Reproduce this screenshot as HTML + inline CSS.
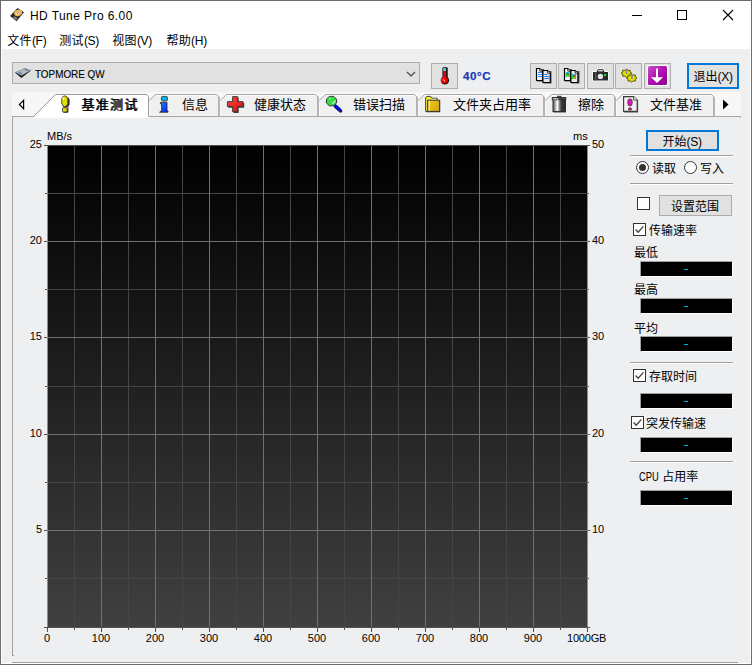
<!DOCTYPE html>
<html lang="zh-CN"><head><meta charset="utf-8"><title>HD Tune Pro 6.00</title>
<style>
*{box-sizing:border-box;margin:0;padding:0}
html,body{width:752px;height:665px;overflow:hidden;background:#eeeff1}
body{position:relative;font-family:"Liberation Sans","Noto Sans CJK SC",sans-serif;font-size:12px;color:#000;-webkit-font-smoothing:antialiased}
.a{position:absolute}
.t{position:absolute;white-space:nowrap;line-height:16px;height:16px}
.cj{font-family:"Liberation Sans","Noto Sans CJK SC",sans-serif;font-size:12px}
.ax{font-family:"Liberation Sans",sans-serif;font-size:11px;line-height:12px;height:12px;position:absolute;white-space:nowrap;color:#000}
.btn{position:absolute;background:#e1e1e1;border:1px solid #adadad}
.blk{position:absolute;background:#000;width:93px;height:16px;left:640px;border:1px solid #fff;border-top-color:#a0a0a0;border-left-color:#a0a0a0}
.blk i{position:absolute;left:43px;top:7px;width:4px;height:1px;background:#00a8e8}
.sep{position:absolute;left:630px;width:103px;height:2px;border-top:1px solid #a0a0a0;border-bottom:1px solid #fff}
.cb{position:absolute;width:13px;height:13px;background:#fff;border:1px solid #333}
.rd{position:absolute;width:13px;height:13px;background:#fff;border:1px solid #333;border-radius:50%}
.l{font-size:12px;letter-spacing:-0.3px}
.tabtxt{position:absolute;top:96px;height:18px;line-height:18px;font-size:13px;white-space:nowrap}
</style></head>
<body>
<div class="a" style="left:0;top:0;width:752px;height:665px;background:#6d6d6d"></div>
<div class="a" style="left:1px;top:1px;width:750px;height:663px;background:#fff"></div>
<div class="a" style="left:2px;top:49px;width:748px;height:614px;background:#eeeff1"></div>
<svg class="a" style="left:8px;top:6px" width="18" height="18" viewBox="0 0 18 18">
<polygon points="9.6,2 16,6.3 8.6,15.2 2,9.9" fill="#2a2a2e"/>
<polygon points="6.2,10.2 9.5,12.3 8.2,14 4.9,11.8" fill="#8a8a90"/>
<ellipse cx="10.1" cy="6.9" rx="4.1" ry="3.2" fill="#f2b451" transform="rotate(-20 10.1 6.9)"/>
<ellipse cx="9.4" cy="7.6" rx="2.2" ry="1.4" fill="#f8d07a" transform="rotate(-20 9.4 7.6)" opacity="0.7"/>
<circle cx="10.2" cy="6.8" r="1.2" fill="#b8b8c4"/>
</svg>
<div class="t" style="left:30px;top:8px;font-family:'Liberation Sans',sans-serif;font-size:12px;letter-spacing:0.42px" id="title">HD Tune Pro 6.00</div>
<svg class="a" style="left:620px;top:0" width="132" height="30" viewBox="0 0 132 30">
<rect x="12" y="15" width="10" height="1" fill="#000"/>
<rect x="57.5" y="10.5" width="9" height="9" fill="none" stroke="#000" stroke-width="1"/>
<path d="M103 10 L113 20 M113 10 L103 20" stroke="#000" stroke-width="1.1" fill="none"/>
</svg>
<div class="t cj" style="left:7.3px;top:33px;letter-spacing:0.3px" id="m1">文件<span class="l">(F)</span></div>
<div class="t cj" style="left:59.3px;top:33px;letter-spacing:0.3px" id="m2">测试<span class="l">(S)</span></div>
<div class="t cj" style="left:112.3px;top:33px;letter-spacing:0.3px" id="m3">视图<span class="l">(V)</span></div>
<div class="t cj" style="left:166.5px;top:33px;letter-spacing:0.3px" id="m4">帮助<span class="l">(H)</span></div>
<div class="btn" style="left:12px;top:62px;width:408px;height:22px"></div>
<svg class="a" style="left:13px;top:65px" width="20" height="16" viewBox="0 0 20 16">
<polygon points="2,7.6 11.5,3.2 18,5.6 8.4,13" fill="#111"/>
<polygon points="2.6,7.2 11.5,3.3 17.4,5.4 8.6,10.8" fill="#b4b8c0"/>
<path d="M5.6 7 L9 9.2" stroke="#4a7ad4" stroke-width="1.3"/>
<path d="M11.8 4.2 L15.2 5.6" stroke="#4a7ad4" stroke-width="1.3"/>
</svg>
<div class="t" style="left:35px;top:66px;font-family:'Liberation Sans',sans-serif;font-size:11px;transform-origin:0 0;transform:scaleX(0.9);-webkit-text-stroke:0.12px #000" id="combo">TOPMORE QW</div>
<svg class="a" style="left:405px;top:69px" width="12" height="10" viewBox="0 0 12 10">
<path d="M2 3 L6 7 L10 3" stroke="#444" stroke-width="1.2" fill="none"/></svg>
<div class="btn" style="left:431px;top:63px;width:27px;height:26px"></div>
<svg class="a" style="left:436px;top:65px" width="18" height="22" viewBox="0 0 18 22">
<rect x="6.4" y="2.3" width="5.3" height="13" rx="1.2" fill="#111"/>
<circle cx="8.9" cy="15.4" r="4.2" fill="#111"/>
<rect x="4.5" y="12.6" width="1.6" height="4.2" rx="0.8" fill="#8fe4ea"/>
<circle cx="8.3" cy="15.1" r="3.4" fill="#f00000"/>
<rect x="7.2" y="3.1" width="2.8" height="3.2" fill="#38dfe8"/>
<rect x="7.2" y="6.1" width="2.8" height="8" fill="#f00000"/>
<path d="M7.2 14.2 q0.3 1.5 1.7 1.7" stroke="#fff" stroke-width="0.9" fill="none"/>
</svg>
<div class="t" style="left:463px;top:68px;font-family:'Liberation Sans',sans-serif;font-size:11.5px;font-weight:bold;letter-spacing:0.6px;-webkit-text-stroke:0.25px #1a3cb4;color:#1a3cb4" id="temp">40°C</div>
<div class="btn" style="left:530px;top:63px;width:27px;height:26px"></div>
<div class="btn" style="left:558px;top:63px;width:27px;height:26px"></div>
<div class="btn" style="left:587px;top:63px;width:27px;height:26px"></div>
<div class="btn" style="left:615px;top:63px;width:27px;height:26px"></div>
<div class="btn" style="left:644px;top:63px;width:27px;height:26px"></div>
<svg class="a" style="left:534px;top:66px" width="20" height="20" viewBox="0 0 20 20"><rect x="3" y="3" width="7" height="12.5" fill="#555"/><rect x="9.5" y="5" width="8" height="12.5" fill="#555"/><g transform="translate(2,2)"><path d="M0.5 0.5 H3.8 L6.5 3.2 V12.5 H0.5 Z" fill="#fafafa" stroke="#000" stroke-width="1.2"/><path d="M3.8 0.8 V3.2 H6.4" fill="#fff" stroke="#000" stroke-width="0.8"/><rect x="2" y="4" width="4" height="1" fill="#1e90ff"/><rect x="2" y="6" width="5" height="1" fill="#1e90ff"/><rect x="2" y="8" width="5" height="1" fill="#1e90ff"/></g><g transform="translate(8.4,4)"><path d="M0.5 0.5 H5.2 L7.9 3.2 V12.5 H0.5 Z" fill="#e6e6e6" stroke="#000" stroke-width="1.2"/><path d="M5.2 0.8 V3.2 H7.800000000000001" fill="#fff" stroke="#000" stroke-width="0.8"/><rect x="2" y="4" width="3" height="1" fill="#1e74ff"/><rect x="2" y="6" width="5" height="1" fill="#1e74ff"/><rect x="2" y="8" width="5" height="1" fill="#1e74ff"/></g></svg>
<svg class="a" style="left:562px;top:66px" width="20" height="20" viewBox="0 0 20 20"><rect x="3" y="3" width="7" height="12.5" fill="#555"/><rect x="9.5" y="5" width="8" height="12.5" fill="#555"/><g transform="translate(2,2)"><path d="M0.5 0.5 H3.8 L6.5 3.2 V12.5 H0.5 Z" fill="#fafafa" stroke="#000" stroke-width="1.2"/><path d="M3.8 0.8 V3.2 H6.4" fill="#fff" stroke="#000" stroke-width="0.8"/><rect x="1.6" y="4" width="4" height="1" fill="#28b4f0"/><rect x="1.6" y="5" width="4" height="4" fill="#22c040"/><rect x="3" y="5.6" width="1.4" height="1.4" fill="#f02000"/><rect x="3" y="7" width="1.4" height="1.6" fill="#e8e000"/></g><g transform="translate(8.4,4)"><path d="M0.5 0.5 H4.8 L7.5 3.2 V12.5 H0.5 Z" fill="#e6e6e6" stroke="#000" stroke-width="1.2"/><path d="M4.8 0.8 V3.2 H7.4" fill="#fff" stroke="#000" stroke-width="0.8"/><rect x="1.6" y="4" width="4" height="1" fill="#28b4f0"/><rect x="1.6" y="5" width="4" height="4" fill="#22c040"/><rect x="3" y="5.6" width="1.4" height="1.4" fill="#f02000"/><rect x="3" y="7" width="1.4" height="1.6" fill="#e8e000"/></g></svg>
<svg class="a" style="left:590px;top:66px" width="22" height="18" viewBox="0 0 22 18">
<path d="M3 6 H6.5 L8 3 H13 L14.5 6 H18 V14.5 H3 Z" fill="#2b2b2b" stroke="#fff" stroke-width="1.6" stroke-linejoin="round"/>
<path d="M3 6 H6.5 L8 3 H13 L14.5 6 H18 V14.5 H3 Z" fill="#2b2b2b"/>
<rect x="8.2" y="3.8" width="4.6" height="1.6" fill="#ddd"/>
<rect x="5.4" y="6" width="0.8" height="8.5" fill="#777"/>
<circle cx="10.4" cy="10.4" r="2.7" fill="#e4e4e4"/>
<rect x="14" y="8" width="2.2" height="2" fill="#10e020"/>
</svg>
<svg class="a" style="left:619px;top:66px" width="22" height="20" viewBox="0 0 22 20"><g stroke="#fff" stroke-width="2" stroke-linejoin="round"><polygon points="12.6,7.2 10.9,8.3 11.1,10.1 8.8,10.0 7.4,11.4 6.0,10.0 3.7,10.1 3.9,8.3 2.2,7.2 3.9,6.1 3.7,4.3 6.0,4.4 7.4,3.0 8.8,4.4 11.1,4.3 10.9,6.1" fill="#e6e000" stroke="#5a5a00" stroke-width="0.8"/><polygon points="18.0,12.0 16.3,13.1 16.5,14.9 14.2,14.8 12.8,16.2 11.4,14.8 9.1,14.9 9.3,13.1 7.6,12.0 9.3,10.9 9.1,9.1 11.4,9.2 12.8,7.8 14.2,9.2 16.5,9.1 16.3,10.9" fill="#e6e000" stroke="#5a5a00" stroke-width="0.8"/></g><polygon points="12.6,7.2 10.9,8.3 11.1,10.1 8.8,10.0 7.4,11.4 6.0,10.0 3.7,10.1 3.9,8.3 2.2,7.2 3.9,6.1 3.7,4.3 6.0,4.4 7.4,3.0 8.8,4.4 11.1,4.3 10.9,6.1" fill="#e6e000" stroke="#5a5a00" stroke-width="0.8"/><polygon points="18.0,12.0 16.3,13.1 16.5,14.9 14.2,14.8 12.8,16.2 11.4,14.8 9.1,14.9 9.3,13.1 7.6,12.0 9.3,10.9 9.1,9.1 11.4,9.2 12.8,7.8 14.2,9.2 16.5,9.1 16.3,10.9" fill="#e6e000" stroke="#5a5a00" stroke-width="0.8"/><rect x="6.6" y="3" width="1.8" height="5" fill="#8888a0"/><rect x="12" y="8" width="1.8" height="5" fill="#8888a0"/></svg>
<svg class="a" style="left:646px;top:64px" width="24" height="24" viewBox="0 0 24 24">
<defs><linearGradient id="pg" x1="0" y1="0" x2="1" y2="1"><stop offset="0" stop-color="#c850c4"/><stop offset="0.5" stop-color="#b010b0"/><stop offset="1" stop-color="#8a008a"/></linearGradient></defs>
<rect x="1" y="1" width="21" height="21" rx="1.5" fill="#fff"/>
<rect x="2" y="2" width="19" height="19" rx="1.5" fill="url(#pg)"/>
<rect x="10" y="4.5" width="2" height="11" fill="#fff"/>
<polygon points="5,13.2 17,13.2 11,19" fill="#fff"/>
</svg>
<div class="a" style="left:687px;top:63px;width:52px;height:26px;background:#e1e1e1;border:2px solid #0078d7"></div>
<div class="t cj" style="left:693.5px;top:69px" id="exit">退出<span class="l">(X)</span></div>
<div class="a" style="left:12px;top:92px;width:729px;height:24px;background:#f7f7f7"></div>
<svg class="a" style="left:0;top:90px" width="752" height="30" viewBox="0 90 752 30">
<rect x="12" y="116" width="729" height="1" fill="#a6a6a6" shape-rendering="crispEdges"/>
<rect x="740" y="116" width="1" height="2" fill="#a6a6a6" shape-rendering="crispEdges"/>
<path d="M33 118 L56 94.5 H146 L148.5 96.5 V118 Z" fill="#fff"/>
<path d="M33.5 116.5 L55.5 94.5 H146.5 L148.5 96.5 V116" fill="none" stroke="#9a9a9a" stroke-width="1"/>
<path d="M149 116 V100.5 L155.5 94.5 H216.5 L219 97 V116 Z" fill="#f0f0f0"/>
<rect x="218" y="97" width="2" height="19" fill="#b4b4b4" shape-rendering="crispEdges"/>
<path d="M149.3 100.5 L155.5 94.5 H216.5 L219.0 97" fill="none" stroke="#a8a8a8" stroke-width="1"/>
<rect x="156" y="95" width="60" height="1" fill="#fcfcfc" shape-rendering="crispEdges"/>
<rect x="149" y="101" width="1" height="15" fill="#fafafa" shape-rendering="crispEdges"/>
<path d="M220 116 V100.5 L226.5 94.5 H315.5 L318 97 V116 Z" fill="#f0f0f0"/>
<rect x="317" y="97" width="2" height="19" fill="#b4b4b4" shape-rendering="crispEdges"/>
<path d="M220.3 100.5 L226.5 94.5 H315.5 L318.0 97" fill="none" stroke="#a8a8a8" stroke-width="1"/>
<rect x="227" y="95" width="88" height="1" fill="#fcfcfc" shape-rendering="crispEdges"/>
<rect x="220" y="101" width="1" height="15" fill="#fafafa" shape-rendering="crispEdges"/>
<path d="M319 116 V100.5 L325.5 94.5 H414.5 L417 97 V116 Z" fill="#f0f0f0"/>
<rect x="416" y="97" width="2" height="19" fill="#b4b4b4" shape-rendering="crispEdges"/>
<path d="M319.3 100.5 L325.5 94.5 H414.5 L417.0 97" fill="none" stroke="#a8a8a8" stroke-width="1"/>
<rect x="326" y="95" width="88" height="1" fill="#fcfcfc" shape-rendering="crispEdges"/>
<rect x="319" y="101" width="1" height="15" fill="#fafafa" shape-rendering="crispEdges"/>
<path d="M418 116 V100.5 L424.5 94.5 H541.5 L544 97 V116 Z" fill="#f0f0f0"/>
<rect x="543" y="97" width="2" height="19" fill="#b4b4b4" shape-rendering="crispEdges"/>
<path d="M418.3 100.5 L424.5 94.5 H541.5 L544.0 97" fill="none" stroke="#a8a8a8" stroke-width="1"/>
<rect x="425" y="95" width="116" height="1" fill="#fcfcfc" shape-rendering="crispEdges"/>
<rect x="418" y="101" width="1" height="15" fill="#fafafa" shape-rendering="crispEdges"/>
<path d="M545 116 V100.5 L551.5 94.5 H612.5 L615 97 V116 Z" fill="#f0f0f0"/>
<rect x="614" y="97" width="2" height="19" fill="#b4b4b4" shape-rendering="crispEdges"/>
<path d="M545.3 100.5 L551.5 94.5 H612.5 L615.0 97" fill="none" stroke="#a8a8a8" stroke-width="1"/>
<rect x="552" y="95" width="60" height="1" fill="#fcfcfc" shape-rendering="crispEdges"/>
<rect x="545" y="101" width="1" height="15" fill="#fafafa" shape-rendering="crispEdges"/>
<path d="M616 116 V100.5 L622.5 94.5 H711.5 L714 97 V116 Z" fill="#f0f0f0"/>
<rect x="713" y="97" width="2" height="19" fill="#b4b4b4" shape-rendering="crispEdges"/>
<path d="M616.3 100.5 L622.5 94.5 H711.5 L714.0 97" fill="none" stroke="#a8a8a8" stroke-width="1"/>
<rect x="623" y="95" width="88" height="1" fill="#fcfcfc" shape-rendering="crispEdges"/>
<rect x="616" y="101" width="1" height="15" fill="#fafafa" shape-rendering="crispEdges"/>
<path d="M23.6 100.3 L19.4 104.5 L23.6 108.7 Z" fill="#fff" stroke="#000" stroke-width="1.2"/>
<path d="M723 99.5 L728.5 104.5 L723 109.5 Z" fill="#000"/>
</svg>
<svg class="a" style="left:58px;top:94px" width="16" height="20" viewBox="0 0 16 20">
<path d="M5.4 2.6 Q7 1.6 9 2.6 L10.6 4.6 V10 L9.4 11.6 V13 H5.6 V11.6 L4.4 10 V4.6 Z" fill="#333" transform="translate(1,0.6)"/>
<path d="M5.2 2.4 Q6.8 1.4 8.4 2.4 L9.8 4.4 V9.8 L8.6 11.4 V12.6 H5 V11.4 L3.8 9.8 V4.4 Z" fill="#e2e000" stroke="#333" stroke-width="0.9"/>
<ellipse cx="5.4" cy="4.6" rx="0.8" ry="1.4" fill="#fff"/>
<rect x="5" y="14.4" width="5.4" height="4.4" rx="1.2" fill="#333"/>
<rect x="4.4" y="13.8" width="4.8" height="4.2" rx="1.2" fill="#e2e000" stroke="#333" stroke-width="0.9"/>
<rect x="9.8" y="13.4" width="1.2" height="1.2" fill="#f0f"/>
</svg>
<svg class="a" style="left:157px;top:94px" width="16" height="20" viewBox="0 0 16 20">
<defs><linearGradient id="ig" x1="0" y1="0" x2="1" y2="1"><stop offset="0" stop-color="#1a8cff"/><stop offset="1" stop-color="#0018ff"/></linearGradient></defs>
<rect x="4.4" y="2.4" width="6" height="4.6" rx="1.2" fill="#00b4f4" stroke="#503020" stroke-width="0.9"/>
<path d="M3.4 8.4 H10 V17 H11 V18.2 H2.6 L4.6 16.6 V9.8 H3.4 Z" fill="url(#ig)" stroke="#3a3020" stroke-width="0.9"/>
</svg>
<svg class="a" style="left:225px;top:94px" width="22" height="20" viewBox="0 0 22 20">
<defs><linearGradient id="rg" x1="0" y1="0" x2="1" y2="1"><stop offset="0" stop-color="#ff4848"/><stop offset="1" stop-color="#e00808"/></linearGradient></defs>
<path d="M8 3 H13 V8 H18.5 V13 H13 V18.4 H8 V13 H2.6 V8 H8 Z" fill="#354848" transform="translate(0.7,0.7)"/>
<path d="M7.6 2.6 H12.6 V7.6 H18 V12.6 H12.6 V17.8 H7.6 V12.6 H2.4 V7.6 H7.6 Z" fill="url(#rg)" stroke="#2c3a3a" stroke-width="0.9"/>
</svg>
<svg class="a" style="left:323px;top:94px" width="22" height="20" viewBox="0 0 22 20">
<path d="M12 12 L17 16.4" stroke="#222" stroke-width="3.4" stroke-linecap="round" transform="translate(0.7,0.6)"/>
<path d="M12 11.6 L16.6 15.8" stroke="#0808d8" stroke-width="3.2" stroke-linecap="round"/>
<polygon points="6.4,2.4 10.6,2.4 13.6,5.2 13.6,9 10.6,11.8 6.4,11.8 3.4,9 3.4,5.2" fill="#30e040" stroke="#302030" stroke-width="0.9"/>
<path d="M6 5.4 L7.6 4" stroke="#d8ffd8" stroke-width="1"/>
<path d="M9 9.8 Q11.4 9 12 6.6" stroke="#d8ffd8" stroke-width="1.2" fill="none"/>
</svg>
<svg class="a" style="left:423px;top:94px" width="20" height="20" viewBox="0 0 20 20">
<defs><linearGradient id="fg" x1="0" y1="0" x2="1" y2="1"><stop offset="0" stop-color="#f0d020"/><stop offset="1" stop-color="#d8a000"/></linearGradient></defs>
<path d="M2.6 3.6 L4 2.4 H7.6 L9 4.2 H14 V6 H16.6 V17.6 H2.6 Z" fill="#303440" transform="translate(0.6,0.6)"/>
<path d="M2.6 3.6 L4 2.4 H7.6 L9 4.2 H14 V6.4 H4.8 V17.4 H2.6 Z" fill="#f6e63a" stroke="#303440" stroke-width="0.9"/><rect x="8.8" y="4.8" width="4.8" height="1.2" fill="#fdf6a0"/>
<rect x="4.8" y="6.2" width="11.8" height="11.2" fill="url(#fg)" stroke="#303440" stroke-width="0.9"/>
<rect x="5.6" y="7" width="1" height="9.6" fill="#fff8b0"/>
<rect x="14.4" y="7" width="0.9" height="9.6" fill="#b0a890"/>
</svg>
<svg class="a" style="left:550px;top:94px" width="20" height="20" viewBox="0 0 20 20">
<defs><linearGradient id="tg" x1="0" y1="0" x2="1" y2="0"><stop offset="0" stop-color="#555"/><stop offset="0.3" stop-color="#ddd"/><stop offset="0.38" stop-color="#fff"/><stop offset="0.5" stop-color="#999"/><stop offset="0.7" stop-color="#3a3a3a"/><stop offset="1" stop-color="#2a2a2a"/></linearGradient></defs>
<rect x="3.6" y="4.4" width="12.4" height="14" fill="#333"/>
<rect x="3" y="5" width="12" height="12.6" fill="url(#tg)" stroke="#2a2a2a" stroke-width="1"/>
<rect x="7.4" y="2.2" width="3.6" height="2" fill="#666" stroke="#2a2a2a" stroke-width="0.8"/>
<rect x="2.2" y="3.4" width="13.6" height="2.4" fill="#444" stroke="#2a2a2a" stroke-width="0.8"/>
<rect x="3" y="4.4" width="5.5" height="1" fill="#eee"/>
</svg>
<svg class="a" style="left:621px;top:94px" width="20" height="20" viewBox="0 0 20 20">
<path d="M2.6 2.6 H13 L16.4 6 V17.8 H2.6 Z" fill="#444" transform="translate(0.7,0.7)"/>
<path d="M2.6 2.6 H12.6 L16.2 6 V17.4 H2.6 Z" fill="#f0f0f0" stroke="#3a3a3a" stroke-width="1.1"/>
<path d="M12.6 2.6 V6 H16.2" fill="#fff" stroke="#3a3a3a" stroke-width="0.9"/>
<ellipse cx="9" cy="8.4" rx="2.3" ry="3.6" fill="#e810d8" stroke="#403010" stroke-width="0.7"/>
<ellipse cx="9" cy="15" rx="1.6" ry="1.2" fill="#e810d8" stroke="#403010" stroke-width="0.7"/>
</svg>
<div class="tabtxt" style="left:82px;letter-spacing:1.3px;text-shadow:1px 0 0 #000;top:96px;margin-left:-1px;" id="tb1">基准测试</div>
<div class="tabtxt" style="left:182px;" id="tb2">信息</div>
<div class="tabtxt" style="left:254px;" id="tb3">健康状态</div>
<div class="tabtxt" style="left:353px;" id="tb4">错误扫描</div>
<div class="tabtxt" style="left:453px;" id="tb5">文件夹占用率</div>
<div class="tabtxt" style="left:578px;" id="tb6">擦除</div>
<div class="tabtxt" style="left:650px;" id="tb7">文件基准</div>
<div class="a" style="left:12px;top:116px;width:1px;height:540px;background:#a0a0a0"></div>
<div class="a" style="left:12px;top:655px;width:2px;height:1px;background:#a0a0a0"></div>
<div class="a" style="left:12px;top:662px;width:726px;height:1px;background:#a0a0a0"></div>
<svg class="a" style="left:0;top:130px" width="620" height="520" viewBox="0 130 620 520" shape-rendering="crispEdges">
<defs><linearGradient id="cg" gradientUnits="userSpaceOnUse" x1="0" y1="145" x2="0" y2="627"><stop offset="0" stop-color="#000"/><stop offset="1" stop-color="#404040"/></linearGradient></defs>
<rect x="47" y="145" width="541" height="483" fill="url(#cg)"/>
<rect x="74" y="145" width="1" height="482" fill="#454545"/>
<rect x="128" y="145" width="1" height="482" fill="#454545"/>
<rect x="182" y="145" width="1" height="482" fill="#454545"/>
<rect x="236" y="145" width="1" height="482" fill="#454545"/>
<rect x="290" y="145" width="1" height="482" fill="#454545"/>
<rect x="344" y="145" width="1" height="482" fill="#454545"/>
<rect x="398" y="145" width="1" height="482" fill="#454545"/>
<rect x="452" y="145" width="1" height="482" fill="#454545"/>
<rect x="506" y="145" width="1" height="482" fill="#454545"/>
<rect x="560" y="145" width="1" height="482" fill="#454545"/>
<rect x="47" y="193" width="540" height="1" fill="#454545"/>
<rect x="47" y="289" width="540" height="1" fill="#454545"/>
<rect x="47" y="386" width="540" height="1" fill="#454545"/>
<rect x="47" y="482" width="540" height="1" fill="#454545"/>
<rect x="47" y="578" width="540" height="1" fill="#454545"/>
<rect x="101" y="145" width="1" height="482" fill="#707070"/>
<rect x="155" y="145" width="1" height="482" fill="#707070"/>
<rect x="209" y="145" width="1" height="482" fill="#707070"/>
<rect x="263" y="145" width="1" height="482" fill="#707070"/>
<rect x="317" y="145" width="1" height="482" fill="#707070"/>
<rect x="371" y="145" width="1" height="482" fill="#707070"/>
<rect x="425" y="145" width="1" height="482" fill="#707070"/>
<rect x="479" y="145" width="1" height="482" fill="#707070"/>
<rect x="533" y="145" width="1" height="482" fill="#707070"/>
<rect x="47" y="241" width="540" height="1" fill="#707070"/>
<rect x="47" y="337" width="540" height="1" fill="#707070"/>
<rect x="47" y="434" width="540" height="1" fill="#707070"/>
<rect x="47" y="530" width="540" height="1" fill="#707070"/>
<rect x="47" y="145" width="541" height="1" fill="#505050"/>
<rect x="47" y="627" width="541" height="1" fill="#505050"/>
<rect x="47" y="146" width="1" height="481" fill="#8c8c8c"/>
<rect x="587" y="146" width="1" height="481" fill="#8c8c8c"/>
<rect x="44" y="145" width="3" height="1" fill="#505050"/>
<rect x="588" y="145" width="2" height="1" fill="#505050"/>
<rect x="45" y="193" width="2" height="1" fill="#505050"/>
<rect x="588" y="193" width="1" height="1" fill="#505050"/>
<rect x="44" y="241" width="3" height="1" fill="#505050"/>
<rect x="588" y="241" width="2" height="1" fill="#505050"/>
<rect x="45" y="289" width="2" height="1" fill="#505050"/>
<rect x="588" y="289" width="1" height="1" fill="#505050"/>
<rect x="44" y="337" width="3" height="1" fill="#505050"/>
<rect x="588" y="337" width="2" height="1" fill="#505050"/>
<rect x="45" y="386" width="2" height="1" fill="#505050"/>
<rect x="588" y="386" width="1" height="1" fill="#505050"/>
<rect x="44" y="434" width="3" height="1" fill="#505050"/>
<rect x="588" y="434" width="2" height="1" fill="#505050"/>
<rect x="45" y="482" width="2" height="1" fill="#505050"/>
<rect x="588" y="482" width="1" height="1" fill="#505050"/>
<rect x="44" y="530" width="3" height="1" fill="#505050"/>
<rect x="588" y="530" width="2" height="1" fill="#505050"/>
<rect x="45" y="578" width="2" height="1" fill="#505050"/>
<rect x="588" y="578" width="1" height="1" fill="#505050"/>
<rect x="44" y="627" width="3" height="1" fill="#505050"/>
<rect x="588" y="627" width="2" height="1" fill="#505050"/>
<rect x="47" y="628" width="1" height="4" fill="#505050"/>
<rect x="74" y="628" width="1" height="2" fill="#505050"/>
<rect x="101" y="628" width="1" height="4" fill="#505050"/>
<rect x="128" y="628" width="1" height="2" fill="#505050"/>
<rect x="155" y="628" width="1" height="4" fill="#505050"/>
<rect x="182" y="628" width="1" height="2" fill="#505050"/>
<rect x="209" y="628" width="1" height="4" fill="#505050"/>
<rect x="236" y="628" width="1" height="2" fill="#505050"/>
<rect x="263" y="628" width="1" height="4" fill="#505050"/>
<rect x="290" y="628" width="1" height="2" fill="#505050"/>
<rect x="317" y="628" width="1" height="4" fill="#505050"/>
<rect x="344" y="628" width="1" height="2" fill="#505050"/>
<rect x="371" y="628" width="1" height="4" fill="#505050"/>
<rect x="398" y="628" width="1" height="2" fill="#505050"/>
<rect x="425" y="628" width="1" height="4" fill="#505050"/>
<rect x="452" y="628" width="1" height="2" fill="#505050"/>
<rect x="479" y="628" width="1" height="4" fill="#505050"/>
<rect x="506" y="628" width="1" height="2" fill="#505050"/>
<rect x="533" y="628" width="1" height="4" fill="#505050"/>
<rect x="560" y="628" width="1" height="2" fill="#505050"/>
<rect x="587" y="628" width="1" height="4" fill="#505050"/>
</svg>
<div class="ax" style="left:47px;top:130px" id="mbs">MB/s</div>
<div class="ax" style="left:573px;top:130px" id="ms">ms</div>
<div class="ax" style="right:710px;top:138px;text-align:right" id="yl0">25</div>
<div class="ax" style="right:710px;top:234px;text-align:right" id="yl1">20</div>
<div class="ax" style="right:710px;top:330px;text-align:right" id="yl2">15</div>
<div class="ax" style="right:710px;top:427px;text-align:right" id="yl3">10</div>
<div class="ax" style="right:710px;top:523px;text-align:right" id="yl4">5</div>
<div class="ax" style="left:592px;top:138px" id="yr0">50</div>
<div class="ax" style="left:592px;top:234px" id="yr1">40</div>
<div class="ax" style="left:592px;top:330px" id="yr2">30</div>
<div class="ax" style="left:592px;top:427px" id="yr3">20</div>
<div class="ax" style="left:592px;top:523px" id="yr4">10</div>
<div class="ax" style="left:27px;top:632px;width:40px;text-align:center" id="xl0">0</div>
<div class="ax" style="left:81px;top:632px;width:40px;text-align:center" id="xl1">100</div>
<div class="ax" style="left:135px;top:632px;width:40px;text-align:center" id="xl2">200</div>
<div class="ax" style="left:189px;top:632px;width:40px;text-align:center" id="xl3">300</div>
<div class="ax" style="left:243px;top:632px;width:40px;text-align:center" id="xl4">400</div>
<div class="ax" style="left:297px;top:632px;width:40px;text-align:center" id="xl5">500</div>
<div class="ax" style="left:351px;top:632px;width:40px;text-align:center" id="xl6">600</div>
<div class="ax" style="left:405px;top:632px;width:40px;text-align:center" id="xl7">700</div>
<div class="ax" style="left:459px;top:632px;width:40px;text-align:center" id="xl8">800</div>
<div class="ax" style="left:513px;top:632px;width:40px;text-align:center" id="xl9">900</div>
<div class="ax" style="left:567px;top:632px;letter-spacing:-0.2px" id="xl10">1000GB</div>
<div class="a" style="left:646px;top:130px;width:73px;height:21px;background:#e1e1e1;border:2px solid #0078d7"></div>
<div class="t cj" style="left:662.5px;top:134px" id="start">开始<span class="l">(S)</span></div>
<div class="sep" style="top:155px"></div>
<div class="rd" style="left:636px;top:161px"></div><div class="a" style="left:639px;top:164px;width:7px;height:7px;border-radius:50%;background:#333"></div>
<div class="t cj" style="left:652px;top:161px" id="r1">读取</div>
<div class="rd" style="left:684px;top:161px"></div>
<div class="t cj" style="left:700px;top:161px" id="r2">写入</div>
<div class="sep" style="top:183px"></div>
<div class="cb" style="left:637px;top:197px"></div>
<div class="btn" style="left:659px;top:195px;width:73px;height:21px"></div>
<div class="t cj" style="left:671px;top:199px" id="range">设置范围</div>
<div class="cb" style="left:633px;top:223px"></div><svg class="a" style="left:633px;top:223px" width="13" height="13" viewBox="0 0 13 13"><path d="M2.6 6.4 L5.2 9.2 L10.4 3.4" stroke="#444" stroke-width="1.4" fill="none"/></svg>
<div class="t cj" style="left:649px;top:223px" id="c1">传输速率</div>
<div class="t cj" style="left:634px;top:245px" id="l1">最低</div>
<div class="blk" style="top:261px"><i></i></div>
<div class="t cj" style="left:634px;top:282px" id="l2">最高</div>
<div class="blk" style="top:298px"><i></i></div>
<div class="t cj" style="left:634px;top:321px" id="l3">平均</div>
<div class="blk" style="top:336px"><i></i></div>
<div class="sep" style="top:362px"></div>
<div class="cb" style="left:633px;top:369px"></div><svg class="a" style="left:633px;top:369px" width="13" height="13" viewBox="0 0 13 13"><path d="M2.6 6.4 L5.2 9.2 L10.4 3.4" stroke="#444" stroke-width="1.4" fill="none"/></svg>
<div class="t cj" style="left:649px;top:369px" id="c2">存取时间</div>
<div class="blk" style="top:393px"><i></i></div>
<div class="cb" style="left:631px;top:416px"></div><svg class="a" style="left:631px;top:416px" width="13" height="13" viewBox="0 0 13 13"><path d="M2.6 6.4 L5.2 9.2 L10.4 3.4" stroke="#444" stroke-width="1.4" fill="none"/></svg>
<div class="t cj" style="left:646px;top:416px" id="c3">突发传输速</div>
<div class="blk" style="top:437px"><i></i></div>
<div class="sep" style="top:461px"></div>
<div class="t cj" style="left:639px;top:469px" id="cpu"><span style="display:inline-block;width:20px;transform-origin:0 50%;transform:scaleX(0.78)">CPU</span> 占用率</div>
<div class="blk" style="top:490px"><i></i></div>
</body></html>
